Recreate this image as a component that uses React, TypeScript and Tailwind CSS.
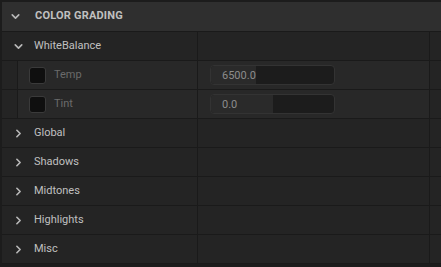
import { ChevronDown, ChevronRight } from 'lucide-react'

type Prop = {
  name: string
  value: string
  fill: number
}

const props: Prop[] = [
  { name: 'Temp', value: '6500.0', fill: 45 },
  { name: 'Tint', value: '0.0', fill: 62 },
]

const groups = ['Global', 'Shadows', 'Midtones', 'Highlights', 'Misc']

function Row({ children, value }: { children: React.ReactNode; value?: React.ReactNode }) {
  return (
    <div className="flex h-[29px] border-b border-[#1a1a1a]">
      <div className="flex w-[195px] items-center">{children}</div>
      <div className="w-px bg-[#1a1a1a]" />
      <div className="flex w-[231px] items-center">{value}</div>
      <div className="w-px bg-[#1a1a1a]" />
      <div className="flex-1" />
    </div>
  )
}

export default function App() {
  return (
    <div
      className="h-[267px] w-[441px] overflow-hidden bg-[#1c1c1c] pl-[2px] pt-[2px] text-[11px]"
      style={{ fontFamily: 'Roboto, "Liberation Sans", sans-serif' }}
    >
      <div className="flex h-[30px] items-center border-b border-[#1a1a1a] bg-[#2f2f2f]">
        <ChevronDown size={13} strokeWidth={3} className="ml-[7px] text-[#b8b8b8]" />
        <span className="ml-[13px] font-bold tracking-[0.2px] text-[#c0c0c0]">COLOR GRADING</span>
      </div>
      <div className="bg-[#242424]">
        <Row>
          <ChevronDown size={13} strokeWidth={3} className="ml-[10px] text-[#b8b8b8]" />
          <span className="ml-[9px] text-[#c0c0c0]">WhiteBalance</span>
        </Row>
        {props.map((p) => (
          <div key={p.name} className="flex h-[29px] border-b border-[#1a1a1a]">
            <div className="w-[15px] bg-[#242424]" />
            <div className="w-px bg-[#1a1a1a]" />
            <div className="flex w-[179px] items-center bg-[#282828]">
              <div className="ml-[11px] h-[17px] w-[17px] rounded-[3px] border border-[#3a3a3a] bg-[#0f0f0f]" />
              <span className="ml-[8px] text-[#6b6b6b]">{p.name}</span>
            </div>
            <div className="w-px bg-[#1a1a1a]" />
            <div className="flex w-[231px] items-center bg-[#282828]">
              <div className="relative ml-[12px] h-[20px] w-[125px] overflow-hidden rounded-[4px] border border-[#333333] bg-[#1c1c1c]">
                <div className="h-full bg-[#2a2a2a]" style={{ width: p.fill }} />
                <span className="absolute left-[11px] top-[2px] text-[#8c8c8c]">{p.value}</span>
              </div>
            </div>
            <div className="w-px bg-[#1a1a1a]" />
            <div className="flex-1 bg-[#242424]" />
          </div>
        ))}
        {groups.map((g) => (
          <Row key={g}>
            <ChevronRight size={13} strokeWidth={3} className="ml-[10px] text-[#b8b8b8]" />
            <span className="ml-[9px] text-[#c0c0c0]">{g}</span>
          </Row>
        ))}
      </div>
    </div>
  )
}
